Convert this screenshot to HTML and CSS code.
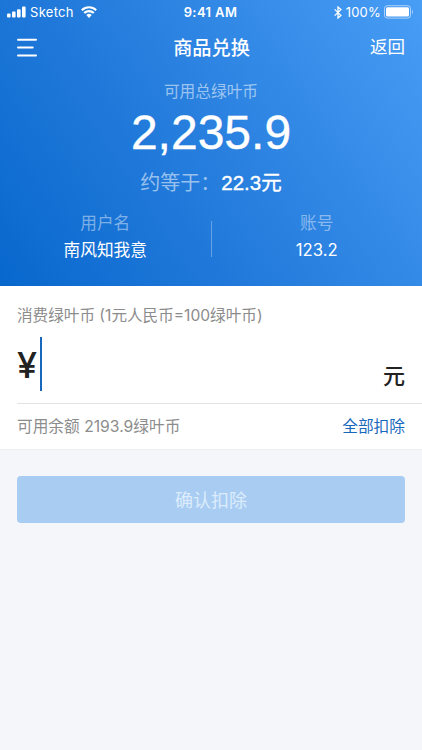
FILE: index.html
```html
<!DOCTYPE html>
<html lang="zh-CN">
<head>
<meta charset="utf-8">
<title>商品兑换</title>
<link rel="stylesheet" href="styles.css">
</head>
<body>
<header class="hero">
  <div class="status">
    <div class="status-left">
      <svg class="signal" width="20" height="12" viewBox="0 0 20 12" fill="#fff"><rect x="0" y="7.6" width="3.6" height="4" rx="1"/><rect x="5" y="5.6" width="3.6" height="6" rx="1"/><rect x="10" y="3.2" width="3.6" height="8.4" rx="1"/><rect x="15" y="0.4" width="3.6" height="11.2" rx="1"/></svg>
      <span class="carrier">Sketch</span>
      <svg class="wifi" width="16" height="12" viewBox="0 0 16 12" fill="none" stroke="#fff" stroke-width="2.1"><path d="M.8 4.2a10.3 10.3 0 0 1 14.4 0"/><path d="M3.2 7.1a6.8 6.8 0 0 1 9.6 0"/><path d="M5.3 9.1a3.8 3.8 0 0 1 5.4 0L8 11.9z" fill="#fff" stroke="none"/></svg>
    </div>
    <span class="clock">9:41 AM</span>
    <div class="status-right">
      <svg width="8" height="13" viewBox="0 0 8 13" fill="none" stroke="#fff" stroke-width="1.3"><path d="M.7 3.4l6.2 6L4 12V1l2.9 2.6-6.2 6"/></svg>
      <span class="percent">100%</span>
      <svg width="30" height="14" viewBox="0 0 30 14"><rect x=".5" y=".7" width="26" height="12.4" rx="2.8" fill="none" stroke="#fff" stroke-opacity=".55"/><rect x="2" y="2.2" width="23" height="9.4" rx="1.5" fill="#fff"/><path d="M28 4.7q2 2.2 0 4.4z" fill="#fff" fill-opacity=".55"/></svg>
    </div>
  </div>
  <nav class="nav">
    <svg width="22" height="20" viewBox="0 0 22 20" stroke="#fff" stroke-width="2" stroke-linecap="round"><path d="M2 1.7h18M2 9.5h14.7M2 17.6h18"/></svg>
    <h1 class="title">商品兑换</h1>
    <a class="back">返回</a>
  </nav>
  <div class="total-label">可用总绿叶币</div>
  <div class="total">2,235.9</div>
  <div class="approx"><span class="muted">约等于：</span><span class="approx-value">22.3元</span></div>
  <div class="account">
    <div class="cell"><span class="cell-label">用户名</span><span class="cell-value">南风知我意</span></div>
    <div class="divider"></div>
    <div class="cell"><span class="cell-label">账号</span><span class="cell-value">123.2</span></div>
  </div>
</header>
<main>
  <section class="panel">
    <div class="hint">消费绿叶币 (1元人民币=100绿叶币)</div>
    <div class="amount">
      <span class="yen">¥</span><span class="caret"></span>
      <span class="unit">元</span>
    </div>
    <div class="balance"><span class="balance-text">可用余额 2193.9绿叶币</span><a class="all">全部扣除</a></div>
  </section>
  <button class="confirm">确认扣除</button>
</main>
</body>
</html>
```
FILE: styles.css
```css
* { box-sizing: border-box; }
body {
  margin: 0;
  width: 422px;
  height: 750px;
  overflow: hidden;
  background: #f4f6f9;
  font-family: Inter, "Noto Sans CJK SC", sans-serif;
  font-weight: 400;
}
svg { display: block; flex: none; }
.hero {
  height: 286px;
  color: #fff;
  background: linear-gradient(56deg, #0867cd 0%, #287fde 50%, #489df5 100%);
}
.status {
  display: grid;
  grid-template-columns: 1fr auto 1fr;
  align-items: center;
  height: 24px;
  padding: 0 8px 0 7px;
}
.status-left, .status-right { display: flex; align-items: center; }
.status-right { justify-content: flex-end; }
.signal { margin-bottom: 1px; }
.carrier { margin: 0 7px 0 3px; font-size: 13px; letter-spacing: .3px; }
.clock { font-size: 13px; font-weight: 600; letter-spacing: .4px; }
.percent { margin: 0 3px 0 4px; font-size: 13px; letter-spacing: .2px; }
.nav {
  display: grid;
  grid-template-columns: 1fr auto 1fr;
  align-items: center;
  height: 47px;
  padding: 0 17px 0 16px;
}
.title { margin: 0; padding-left: 2px; font-size: 19.2px; line-height: 28px; font-weight: 500; }
.back { justify-self: end; font-size: 17.5px; line-height: 26px; padding-bottom: 2px; }
.total-label {
  height: 40px;
  line-height: 42px;
  text-align: center;
  font-size: 15.7px;
  color: rgba(255, 255, 255, .55);
}
.total {
  height: 44px;
  line-height: 44px;
  text-align: center;
  font-family: "Liberation Sans", Arial, sans-serif;
  font-size: 48px;
  -webkit-text-stroke: .4px #fff;
}
.approx {
  display: flex;
  justify-content: center;
  height: 54px;
  line-height: 56px;
  font-size: 20px;
}
.muted { color: rgba(255, 255, 255, .55); }
.approx-value {
  padding-left: 1px;
  font-family: "Liberation Sans", "Noto Sans CJK SC", sans-serif;
  font-size: 20.5px;
  -webkit-text-stroke: .35px #fff;
}
.account {
  display: flex;
  align-items: flex-start;
  padding-top: 1px;
}
.cell {
  flex: 1;
  display: flex;
  flex-direction: column;
  align-items: center;
  font-size: 16.7px;
  line-height: 27px;
}
.cell-label { color: rgba(255, 255, 255, .45); }
.divider {
  width: 1px;
  height: 36px;
  margin-top: 11px;
  background: rgba(255, 255, 255, .3);
}
.panel {
  height: 163px;
  padding-left: 17px;
  background: #fff;
  box-shadow: 0 1px 0 #eceef0;
}
.hint { height: 51px; line-height: 60px; font-size: 15.6px; color: #8c8c8c; }
.amount {
  display: flex;
  align-items: flex-start;
  height: 67px;
  padding-right: 17px;
  border-bottom: 1px solid #e3e3e3;
  color: #222;
}
.yen { width: 21px; line-height: 56px; font-size: 36px; font-weight: 500; }
.caret { width: 2px; height: 54px; margin-left: 2px; background: #1768bd; }
.unit { margin-left: auto; line-height: 78px; font-size: 22px; font-weight: 500; }
.balance {
  display: flex;
  justify-content: space-between;
  padding-right: 17px;
  line-height: 46px;
  font-size: 15.7px;
  color: #8c8c8c;
}
.all { color: #1768bd; }
.confirm {
  display: block;
  width: 388px;
  height: 47px;
  margin: 27px 17px 0;
  padding: 0 0 1px;
  border: 0;
  border-radius: 4px;
  background: #a9cdf2;
  color: #dcecfc;
  font: inherit;
  font-size: 18px;
}
```
